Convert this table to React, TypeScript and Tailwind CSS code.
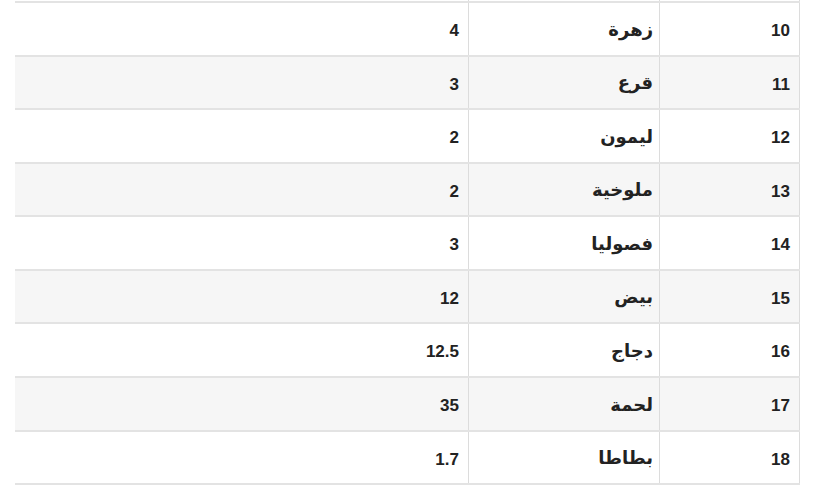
import React from "react";

const rows = [
  { n: "10", name: "زهرة", v: "4", h: "h-[54px]", bg: "bg-white" },
  { n: "11", name: "قرع", v: "3", h: "h-[53px]", bg: "bg-[#f6f6f6]" },
  { n: "12", name: "ليمون", v: "2", h: "h-[54px]", bg: "bg-white" },
  { n: "13", name: "ملوخية", v: "2", h: "h-[53px]", bg: "bg-[#f6f6f6]" },
  { n: "14", name: "فصوليا", v: "3", h: "h-[54px]", bg: "bg-white" },
  { n: "15", name: "بيض", v: "12", h: "h-[53px]", bg: "bg-[#f6f6f6]" },
  { n: "16", name: "دجاج", v: "12.5", h: "h-[54px]", bg: "bg-white" },
  { n: "17", name: "لحمة", v: "35", h: "h-[54px]", bg: "bg-[#f6f6f6]" },
  { n: "18", name: "بطاطا", v: "1.7", h: "h-[53px]", bg: "bg-white" },
];

export default function App() {
  return (
    <div className="w-[817px] h-[503px] bg-white overflow-hidden font-['Liberation_Sans','DejaVu_Sans',sans-serif] text-[17px] font-bold text-[#222]">
      <div dir="rtl" className="ml-[15px] mr-[17px]">
        <div className="grid grid-cols-[141px_191px_1fr] h-[1px]">
          <div className="border-l border-r border-[#dcdcdc]" />
          <div className="border-l border-[#dcdcdc]" />
          <div />
        </div>
        {rows.map((r) => (
          <div
            key={r.n}
            className={`grid grid-cols-[141px_191px_1fr] border-t-2 border-[#e3e3e3] ${r.h} ${r.bg}`}
          >
            <div className="flex items-center pr-[9px] pt-[4px] border-r border-l border-[#dcdcdc]">
              {r.n}
            </div>
            <div className="flex items-center pr-[6px] pt-[2px] border-l border-[#dcdcdc] text-[18px]">
              {r.name}
            </div>
            <div className="flex items-center pr-[9px] pt-[4px]">
              {r.v}
            </div>
          </div>
        ))}
        <div className="border-t-2 border-[#e3e3e3]" />
      </div>
    </div>
  );
}
